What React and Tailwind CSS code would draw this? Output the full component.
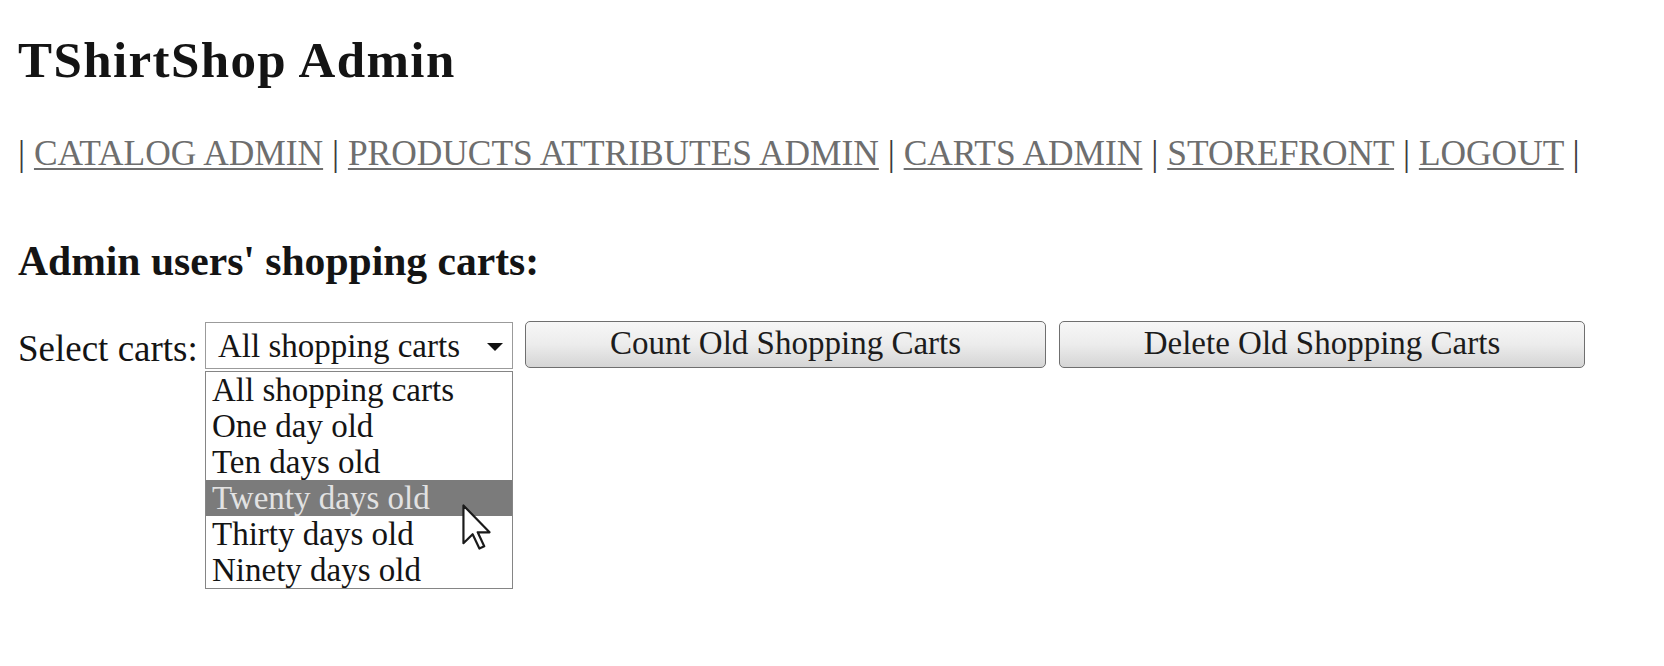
import React from 'react';

const navLinks = ['CATALOG ADMIN', 'PRODUCTS ATTRIBUTES ADMIN', 'CARTS ADMIN', 'STOREFRONT', 'LOGOUT'];

const options = [
  'All shopping carts',
  'One day old',
  'Ten days old',
  'Twenty days old',
  'Thirty days old',
  'Ninety days old',
];

function Cursor() {
  return (
    <svg width="29" height="46" viewBox="0 0 12 19" className="absolute left-[256px] top-[132px]">
      <path
        d="M0.6 0.6 L0.6 16.2 L4.4 12.5 L7.2 18.4 L9.2 17.5 L6.5 11.7 L11.4 11.7 Z"
        fill="white"
        stroke="#1a1a1a"
        strokeWidth="0.9"
        strokeLinejoin="round"
      />
    </svg>
  );
}

export default function App() {
  const highlighted = 3;

  return (
    <div className="min-h-screen bg-white pl-[18px] pt-[35px] font-['Liberation_Serif',serif] text-[#141414]">
      <h1 className="text-[51px] leading-none font-bold tracking-[1.4px]">TShirtShop Admin</h1>

      {/* Admin menu */}
      <nav className="mt-[50px] text-[35.4px] leading-none text-[#3a3a3a]">
        |{' '}
        {navLinks.map((link) => (
          <React.Fragment key={link}>
            <a href="#" className="text-[#6e6e6e] underline underline-offset-[3px] decoration-[1.5px]">
              {link}
            </a>{' '}
            |{' '}
          </React.Fragment>
        ))}
      </nav>

      <h2 className="mt-[70px] text-[41.6px] leading-none font-bold">Admin users' shopping carts:</h2>

      <div className="mt-[38px] flex items-start">
        <label className="w-[187px] pt-[9px] text-[37px] leading-none">Select carts:</label>

        {/* Select with its open list */}
        <div className="relative mt-[1px]">
          <div className="flex h-[47px] w-[308px] items-start justify-between border border-[#9b9b9b] bg-white pl-[12px] pr-[9px]">
            <span className="pt-[7px] text-[33px] leading-none">All shopping carts</span>
            <svg width="16" height="8" viewBox="0 0 16 8" className="mt-[20px]">
              <path d="M0 0 L16 0 L8 8 Z" fill="#111" />
            </svg>
          </div>
          <ul className="absolute left-0 top-[49px] w-[308px] border border-[#858585] bg-white">
            {options.map((opt, i) => (
              <li
                key={opt}
                className={
                  i === highlighted
                    ? 'h-[36px] bg-[#7b7b7b] pl-[6px] text-[33px] leading-[36px] text-[#e2e2e2]'
                    : 'h-[36px] pl-[6px] text-[33px] leading-[36px]'
                }
              >
                {opt}
              </li>
            ))}
            <Cursor />
          </ul>
        </div>

        <button className="ml-[12px] flex h-[47px] w-[521px] items-center justify-center rounded-[5px] border border-[#6f6f6f] bg-gradient-to-b from-[#f7f7f7] via-[#ececec] to-[#d5d5d5] pb-[3px] text-[33px] leading-none text-[#1c1c1c]">
          Count Old Shopping Carts
        </button>
        <button className="ml-[13px] flex h-[47px] w-[526px] items-center justify-center rounded-[5px] border border-[#6f6f6f] bg-gradient-to-b from-[#f7f7f7] via-[#ececec] to-[#d5d5d5] pb-[3px] text-[33px] leading-none text-[#1c1c1c]">
          Delete Old Shopping Carts
        </button>
      </div>
    </div>
  );
}
